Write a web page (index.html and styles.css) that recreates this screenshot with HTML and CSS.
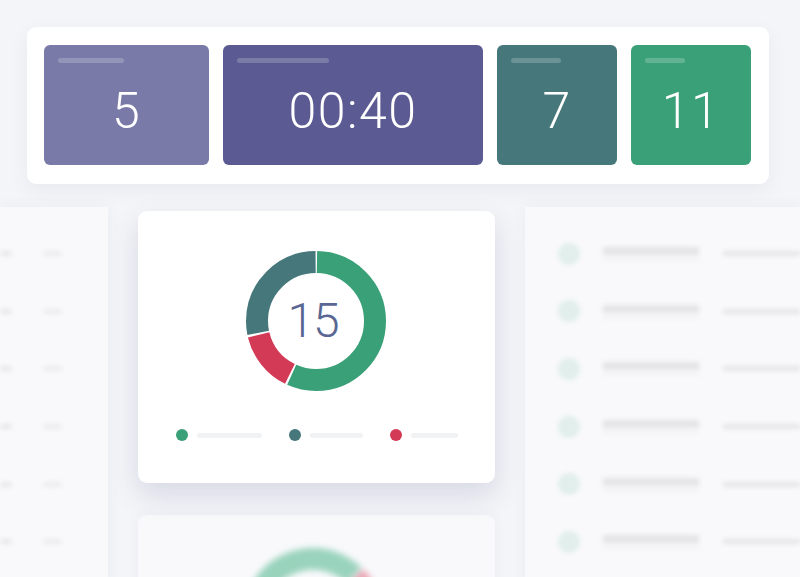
FILE: index.html
```html
<!DOCTYPE html>
<html>
<head>
<meta charset="utf-8">
<link rel="stylesheet" href="styles.css">
</head>
<body>
<div class="page">
  <div class="stats">
    <div class="tile t1"><div class="lbl w66"></div><div class="num">5</div></div>
    <div class="tile t2"><div class="lbl w92"></div><div class="num">00:40</div></div>
    <div class="tile t3"><div class="lbl w50"></div><div class="num">7</div></div>
    <div class="tile t4"><div class="lbl w40"></div><div class="num">11</div></div>
  </div>
  <div class="row">
    <div class="panel left">
      <div class="blur">
        <div class="lrow"><span class="blob"></span><span class="dots"></span></div>
        <div class="lrow"><span class="blob"></span><span class="dots"></span></div>
        <div class="lrow"><span class="blob"></span><span class="dots"></span></div>
        <div class="lrow"><span class="blob"></span><span class="dots"></span></div>
        <div class="lrow"><span class="blob"></span><span class="dots"></span></div>
        <div class="lrow"><span class="blob"></span><span class="dots"></span></div>
      </div>
    </div>
    <div class="middle">
      <div class="card">
        <div class="donut">
          <svg width="140" height="140" viewBox="0 0 140 140">
            <g transform="rotate(-90 70 70)" fill="none" stroke-width="22">
              <circle cx="70" cy="70" r="59" stroke="#3aa078" stroke-dasharray="209.1 400" stroke-dashoffset="-1"/>
              <circle cx="70" cy="70" r="59" stroke="#d23a56" stroke-dasharray="51.5 400" stroke-dashoffset="-212.1"/>
              <circle cx="70" cy="70" r="59" stroke="#46777b" stroke-dasharray="104.1 400" stroke-dashoffset="-265.6"/>
            </g>
          </svg>
          <div class="total">15</div>
        </div>
        <div class="legend">
          <div class="li"><span class="dot g"></span><span class="bar" style="width:65px"></span></div>
          <div class="li"><span class="dot tl"></span><span class="bar" style="width:53px"></span></div>
          <div class="li"><span class="dot r"></span><span class="bar" style="width:47px"></span></div>
        </div>
      </div>
      <div class="card ghost">
        <div class="ghost-donut">
          <svg width="140" height="140" viewBox="0 0 140 140">
            <g transform="rotate(-152 70 70)" fill="none" stroke-width="22">
              <circle cx="70" cy="70" r="59" stroke="#8fcfb6" stroke-dasharray="109 400" stroke-dashoffset="0"/>
              <circle cx="70" cy="70" r="59" stroke="#e99aaa" stroke-dasharray="16 400" stroke-dashoffset="-111"/>
              <circle cx="70" cy="70" r="59" stroke="#9ab7b9" stroke-dasharray="60 400" stroke-dashoffset="-129"/>
            </g>
          </svg>
        </div>
      </div>
    </div>
    <div class="panel right">
      <div class="blur">
        <div class="rrow"><span class="avatar"></span><span class="txt"><i></i><b></b></span><span class="line"></span></div>
        <div class="rrow"><span class="avatar"></span><span class="txt"><i></i><b></b></span><span class="line"></span></div>
        <div class="rrow"><span class="avatar"></span><span class="txt"><i></i><b></b></span><span class="line"></span></div>
        <div class="rrow"><span class="avatar"></span><span class="txt"><i></i><b></b></span><span class="line"></span></div>
        <div class="rrow"><span class="avatar"></span><span class="txt"><i></i><b></b></span><span class="line"></span></div>
        <div class="rrow"><span class="avatar"></span><span class="txt"><i></i><b></b></span><span class="line"></span></div>
      </div>
    </div>
  </div>
</div>
</body>
</html>
```

FILE: styles.css
```css
html, body {
  margin: 0;
  padding: 0;
}
body {
  width: 800px;
  height: 577px;
  overflow: hidden;
  background: #f4f5f8;
  font-family: Roboto, "Liberation Sans", sans-serif;
}
.page {
  padding-top: 27px;
  height: 577px;
  box-sizing: border-box;
  overflow: hidden;
}
.stats {
  margin-left: 27px;
  width: 742px;
  height: 157px;
  box-sizing: border-box;
  padding: 18px 18px 0 17px;
  background: #fff;
  border-radius: 9px;
  box-shadow: 0 6px 18px rgba(70, 80, 130, 0.07);
  display: flex;
  gap: 14px;
  position: relative;
  z-index: 2;
}
.tile {
  height: 120px;
  border-radius: 6px;
  display: flex;
  flex-direction: column;
  color: #fff;
}
.t1 { width: 165px; background: #7a7aa8; }
.t2 { width: 260px; background: #5b5a93; }
.t3 { width: 120px; background: #46777b; }
.t4 { width: 120px; background: #3aa078; }
.lbl {
  margin: 13px 0 0 14px;
  height: 5px;
  border-radius: 3px;
  background: rgba(255, 255, 255, 0.2);
}
.w66 { width: 66px; }
.w92 { width: 92px; }
.w50 { width: 50px; }
.w40 { width: 40px; }
.num {
  margin-top: 18px;
  font-size: 50px;
  line-height: 60px;
  font-weight: 300;
  text-align: center;
  letter-spacing: 1.5px;
}
.row {
  margin-top: 27px;
  display: grid;
  grid-template-columns: 108px 357px 275px;
  column-gap: 30px;
}
.panel {
  height: 380px;
  background: #f9f9fb;
  margin-top: -4px;
  box-shadow: 0 0 14px rgba(70, 80, 130, 0.05);
}
.blur {
  filter: blur(2px);
  padding-top: 18px;
}
.left .lrow, .right .rrow {
  height: 57.6px;
  display: flex;
  align-items: center;
}
.blob {
  width: 12px;
  height: 5px;
  background: #e8e8eb;
  border-radius: 3px;
}
.dots {
  margin-left: 31px;
  width: 19px;
  height: 5px;
  background: #ececef;
  border-radius: 3px;
}
.avatar {
  margin-left: 33px;
  width: 22px;
  height: 22px;
  border-radius: 50%;
  background: #e1eeeb;
}
.txt {
  margin-left: 23px;
  width: 96px;
  display: flex;
  flex-direction: column;
  gap: 3px;
}
.txt i {
  display: block;
  height: 8px;
  background: #e4e4e7;
}
.txt b {
  display: block;
  height: 2px;
  background: #eeeef0;
}
.line {
  margin-left: 24px;
  flex: 1;
  height: 5px;
  background: #e6e6e9;
}
.middle {
  display: flex;
  flex-direction: column;
  gap: 32px;
}
.card {
  height: 272px;
  box-sizing: border-box;
  background: #fff;
  border-radius: 9px;
  box-shadow: 0 12px 28px rgba(60, 70, 130, 0.16);
  padding-top: 40px;
  position: relative;
  z-index: 1;
  flex: none;
}
.donut {
  width: 140px;
  height: 140px;
  margin-left: 108px;
  position: relative;
}
.donut svg {
  display: block;
}
.total {
  position: absolute;
  left: 0;
  top: 0;
  width: 140px;
  height: 140px;
  line-height: 140px;
  text-align: center;
  font-size: 48px;
  font-weight: 300;
  color: #5a6793;
  letter-spacing: -1px;
  margin-left: -3px;
}
.legend {
  margin-top: 38px;
  padding-left: 38px;
  display: flex;
  gap: 27px;
}
.li {
  display: flex;
  align-items: center;
  gap: 9px;
}
.dot {
  width: 12px;
  height: 12px;
  border-radius: 50%;
}
.dot.g { background: #3aa078; }
.dot.tl { background: #46777b; }
.dot.r { background: #d23a56; }
.bar {
  height: 5px;
  border-radius: 3px;
  background: #f1f2f4;
}
.ghost {
  background: #f9f9fb;
  box-shadow: 0 0 14px rgba(70, 80, 130, 0.05);
  padding-top: 33px;
  z-index: 0;
}
.ghost-donut {
  margin-left: 105px;
  width: 140px;
  filter: blur(3px);
  opacity: 0.9;
}
.ghost-donut svg { display: block; }
```
